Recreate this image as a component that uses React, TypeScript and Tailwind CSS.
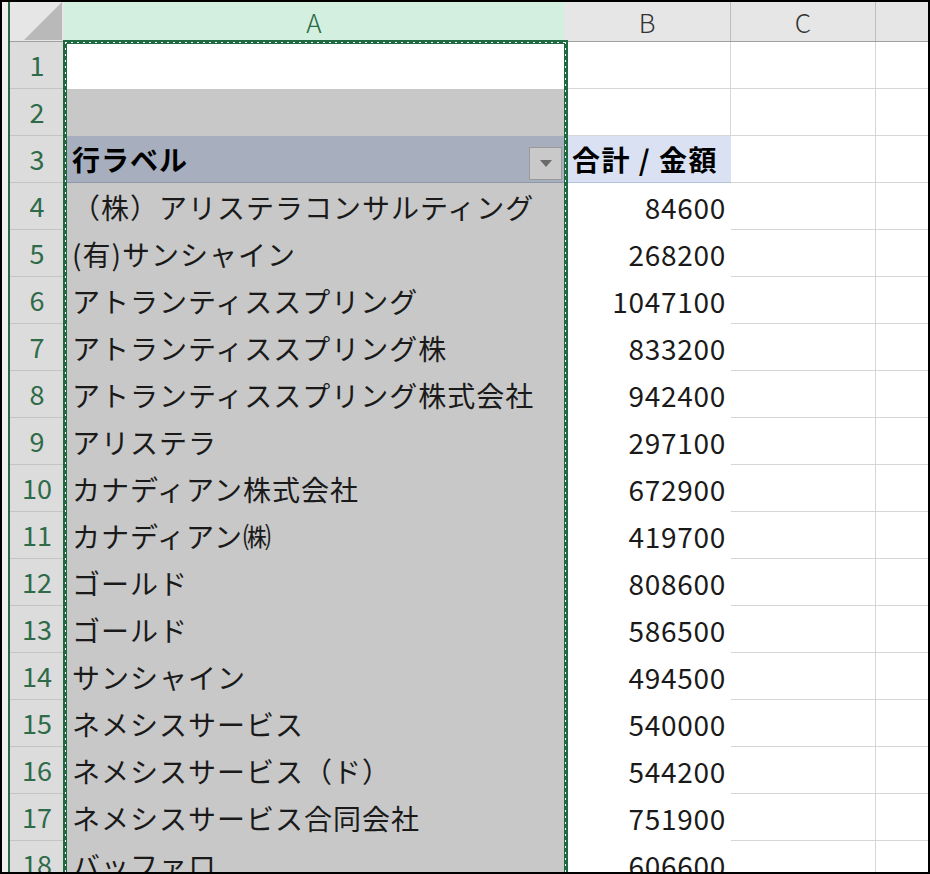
import React from 'react';

const rows: [string, string][] = [
  ['（株）アリステラコンサルティング', '84600'],
  ['(有)サンシャイン', '268200'],
  ['アトランティススプリング', '1047100'],
  ['アトランティススプリング株', '833200'],
  ['アトランティススプリング株式会社', '942400'],
  ['アリステラ', '297100'],
  ['カナディアン株式会社', '672900'],
  ['カナディアン㈱', '419700'],
  ['ゴールド', '808600'],
  ['ゴールド', '586500'],
  ['サンシャイン', '494500'],
  ['ネメシスサービス', '540000'],
  ['ネメシスサービス（ド）', '544200'],
  ['ネメシスサービス合同会社', '751900'],
  ['バッファロ', '606600'],
];

const font = { fontFamily: '"Noto Sans CJK JP", "Noto Sans", sans-serif' };

const RowHead = ({ n }: { n: number }) => (
  <div className="h-[47px] shrink-0 flex items-center justify-center bg-[#dcdcdc] border-b border-[#c4c4c4] text-[27px] text-[#2f6b48]">
    {n}
  </div>
);

export default function App() {
  return (
    <div className="w-[930px] h-[874px] overflow-hidden bg-white border-2 border-black flex" style={font}>
      {/* left edge strip */}
      <div className="w-[6px] shrink-0 bg-[#efefef]" />
      <div className="w-[2px] shrink-0 bg-[#2a6a45]" />

      {/* row headers */}
      <div className="w-[54px] shrink-0 flex flex-col">
        <div className="h-[40px] shrink-0 bg-[#e6e6e6] border-b border-[#a0a0a0] relative">
          <svg className="absolute left-[14px] top-0" width="38" height="38" viewBox="0 0 38 38">
            <polygon points="38,0 38,38 0,38" fill="#b9b9b9" />
          </svg>
        </div>
        {Array.from({ length: 18 }, (_, i) => (
          <RowHead key={i} n={i + 1} />
        ))}
      </div>

      {/* grid */}
      <div className="flex-1 relative">
        {/* column headers */}
        <div className="flex h-[40px] border-b border-[#a0a0a0]">
          <div className="w-[500px] shrink-0 bg-[#d3efdf] flex items-center justify-center text-[26px] text-[#2a6a45] font-light">A</div>
          <div className="w-[167px] shrink-0 bg-[#e6e6e6] border-r border-[#bdbdbd] flex items-center justify-center text-[26px] text-[#333] font-light">B</div>
          <div className="w-[145px] shrink-0 bg-[#e6e6e6] border-r border-[#bdbdbd] flex items-center justify-center text-[26px] text-[#333] font-light">C</div>
          <div className="flex-1 bg-[#e6e6e6]" />
        </div>

        {/* row 1 */}
        <div className="flex h-[47px]">
          <div className="w-[500px] shrink-0 bg-white" />
          <div className="w-[167px] shrink-0 border-r border-b border-[#d6d6d6]" />
          <div className="w-[145px] shrink-0 border-r border-b border-[#d6d6d6]" />
          <div className="flex-1 border-b border-[#d6d6d6]" />
        </div>
        {/* row 2 */}
        <div className="flex h-[47px]">
          <div className="w-[500px] shrink-0 bg-[#c8c8c8]" />
          <div className="w-[167px] shrink-0 border-r border-b border-[#d6d6d6]" />
          <div className="w-[145px] shrink-0 border-r border-b border-[#d6d6d6]" />
          <div className="flex-1 border-b border-[#d6d6d6]" />
        </div>
        {/* row 3: pivot header */}
        <div className="flex h-[47px]">
          <div className="w-[500px] shrink-0 bg-[#a7aebd] border-b border-[#8e97a8] flex items-center pl-[8px] text-[28px] font-bold text-black relative tracking-[1px]">
            行ラベル
            <div className="absolute right-[2px] top-[11px] w-[33px] h-[33px] bg-[#c9c9c9] border border-[#9a9a9a] flex items-center justify-center">
              <svg width="12" height="7" viewBox="0 0 12 7">
                <polygon points="0,0 12,0 6,7" fill="#6a6a6a" />
              </svg>
            </div>
          </div>
          <div className="w-[167px] shrink-0 bg-[#d9e1f2] border-b border-[#b4c2dc] flex items-center pl-[8px] text-[28px] font-bold text-black whitespace-nowrap tracking-[1.5px]">
            合計 / 金額
          </div>
          <div className="w-[145px] shrink-0 border-r border-b border-[#d6d6d6]" />
          <div className="flex-1 border-b border-[#d6d6d6]" />
        </div>
        {rows.map(([label, amt], i) => (
          <div key={i} className="flex h-[47px]">
            <div className="w-[500px] shrink-0 bg-[#c8c8c8] flex items-center pl-[8px] text-[28px] text-[#1a1a1a] whitespace-nowrap overflow-hidden tracking-[1px]">
              {label}
            </div>
            <div className="w-[167px] shrink-0 flex items-center justify-end pr-[5px] text-[28px] text-[#1a1a1a] tracking-[0.7px]">
              {amt}
            </div>
            <div className="w-[145px] shrink-0 border-r border-b border-[#d6d6d6]" />
            <div className="flex-1 border-b border-[#d6d6d6]" />
          </div>
        ))}

        {/* copy selection marquee */}
        <div className="absolute left-[-1px] top-[38px] w-[505px] h-[900px] border-[4px] border-[#1f6a40] pointer-events-none">
          <div className="absolute left-[-2px] top-[-2px] bottom-0 w-px bg-[repeating-linear-gradient(to_bottom,#ffffff_0px,#ffffff_2px,transparent_2px,transparent_6px)]" />
          <div className="absolute right-[-2px] top-[-2px] bottom-0 w-px bg-[repeating-linear-gradient(to_bottom,#ffffff_0px,#ffffff_2px,transparent_2px,transparent_6px)]" />
          <div className="absolute left-[-2px] right-[-2px] top-[-2px] h-px bg-[repeating-linear-gradient(to_right,#ffffff_0px,#ffffff_2px,transparent_2px,transparent_6px)]" />
        </div>
      </div>
    </div>
  );
}
